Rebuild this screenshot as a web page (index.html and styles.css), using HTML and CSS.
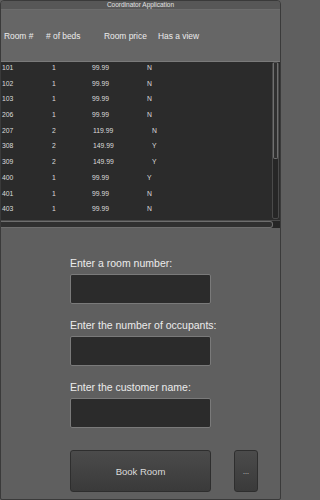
FILE: index.html
```html
<!DOCTYPE html>
<html>
<head>
<meta charset="utf-8">
<link rel="stylesheet" href="styles.css">
</head>
<body>
<div class="window">
  <div class="titlebar">Coordinator Application</div>
  <div class="header">
    <span class="h-room">Room #</span>
    <span class="h-beds"># of beds</span>
    <span class="h-price">Room price</span>
    <span class="h-view">Has a view</span>
  </div>
  <div class="tablebody">
    <div class="rows">
      <div class="row"><span class="c-room">101</span><span class="c-beds">1</span><span class="c-price">99.99</span><span class="c-view">N</span></div>
      <div class="row"><span class="c-room">102</span><span class="c-beds">1</span><span class="c-price">99.99</span><span class="c-view">N</span></div>
      <div class="row"><span class="c-room">103</span><span class="c-beds">1</span><span class="c-price">99.99</span><span class="c-view">N</span></div>
      <div class="row"><span class="c-room">206</span><span class="c-beds">1</span><span class="c-price">99.99</span><span class="c-view">N</span></div>
      <div class="row"><span class="c-room">207</span><span class="c-beds">2</span><span class="c-price wide">119.99</span><span class="c-view wide">N</span></div>
      <div class="row"><span class="c-room">308</span><span class="c-beds">2</span><span class="c-price wide">149.99</span><span class="c-view wide">Y</span></div>
      <div class="row"><span class="c-room">309</span><span class="c-beds">2</span><span class="c-price wide">149.99</span><span class="c-view wide">Y</span></div>
      <div class="row"><span class="c-room">400</span><span class="c-beds">1</span><span class="c-price">99.99</span><span class="c-view">Y</span></div>
      <div class="row"><span class="c-room">401</span><span class="c-beds">1</span><span class="c-price">99.99</span><span class="c-view">N</span></div>
      <div class="row"><span class="c-room">403</span><span class="c-beds">1</span><span class="c-price">99.99</span><span class="c-view">N</span></div>
    </div>
    <div class="vscroll"><div class="vthumb"></div></div>
  </div>
  <div class="hscroll"><div class="hthumb"></div></div>
  <div class="form">
    <div class="group">
      <div class="label">Enter a room number:</div>
      <div class="field"></div>
    </div>
    <div class="group">
      <div class="label">Enter the number of occupants:</div>
      <div class="field"></div>
    </div>
    <div class="group">
      <div class="label">Enter the customer name:</div>
      <div class="field"></div>
    </div>
    <div class="buttons">
      <div class="btn book">Book Room</div>
      <div class="btn more">...</div>
    </div>
  </div>
</div>
</body>
</html>
```

FILE: styles.css
```css
html, body {
  margin: 0;
  padding: 0;
  background: #5f5f5f;
}
body {
  font-family: "Liberation Sans", Arial, sans-serif;
}
.window {
  width: 281px;
  height: 500px;
  box-sizing: border-box;
  border: 1px solid #3a3a3a;
  border-radius: 4px 4px 2px 2px;
  background: #5f5f5f;
  overflow: hidden;
  display: flex;
  flex-direction: column;
}
.titlebar {
  height: 8px;
  line-height: 8px;
  background: #575757;
  color: #e2e2e2;
  font-size: 6.5px;
  text-align: center;
  border-bottom: 1px solid #6c6c6c;
}
.header {
  height: 52px;
  box-sizing: border-box;
  background: #666666;
  border-bottom: 1px solid #7a7a7a;
  display: flex;
  align-items: center;
  font-size: 8.4px;
  color: #ececec;
}
.h-room { margin-left: 3px; width: 42px; }
.h-beds { width: 58px; }
.h-price { width: 54px; }
.h-view { }
.tablebody {
  height: 158px;
  background: #2b2b2b;
  display: flex;
}
.rows {
  flex: 1;
}
.row {
  height: 15.7px;
  line-height: 11px;
  display: flex;
  font-size: 6.8px;
  color: #dcdcdc;
}
.c-room { margin-left: 1px; width: 50px; }
.c-beds { width: 40px; }
.c-price { width: 55px; }
.c-price.wide { padding-left: 1px; width: 59px; }
.c-view { }
.vscroll {
  width: 5px;
  margin: 0 1px 1px 1px;
  border: 1px solid #4a4a4a;
  border-radius: 2px;
  background: #262626;
  display: flex;
  flex-direction: column;
}
.vthumb {
  height: 96px;
  border: 1px solid #707070;
  border-top: none;
  border-radius: 0 0 2px 2px;
  background: #303030;
  box-sizing: border-box;
}
.hscroll {
  height: 8px;
  box-sizing: border-box;
  border-top: 1px solid #4a4a4a;
  background: #262626;
  padding-right: 7px;
  display: flex;
}
.hthumb {
  flex: 1;
  border: 1px solid #6e6e6e;
  border-left: none;
  border-radius: 0 3px 3px 0;
  background: #303030;
}
.form {
  padding-left: 69px;
  padding-top: 29px;
  display: flex;
  flex-direction: column;
}
.group {
  margin-bottom: 15px;
}
.label {
  font-size: 10.5px;
  line-height: 12px;
  color: #ececec;
  margin-bottom: 5px;
}
.field {
  width: 141px;
  height: 30px;
  box-sizing: border-box;
  background: #2b2b2b;
  border: 1px solid #7a7a7a;
  border-radius: 2px;
}
.buttons {
  margin-top: 7px;
  display: flex;
  gap: 23px;
}
.btn {
  height: 42px;
  box-sizing: border-box;
  border: 1px solid #2e2e2e;
  border-radius: 3px;
  background: linear-gradient(#4b4b4b, #3a3a3a);
  color: #dcdcdc;
  display: flex;
  align-items: center;
  justify-content: center;
}
.book {
  width: 141px;
  font-size: 9.5px;
}
.more {
  width: 24px;
  font-size: 7px;
}
```
